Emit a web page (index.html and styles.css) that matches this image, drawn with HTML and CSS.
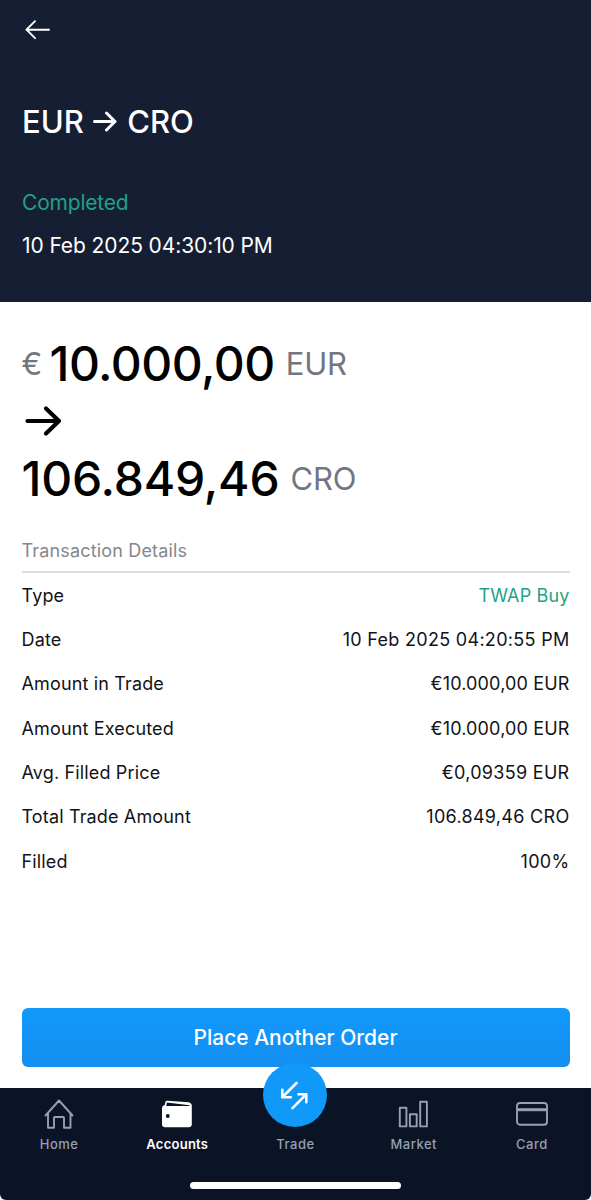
FILE: index.html
```html
<!DOCTYPE html>
<html lang="en">
<head>
    <meta charset="UTF-8">
    <meta name="viewport" content="width=device-width, initial-scale=1.0">
    <title>EUR to CRO</title>
    <link rel="stylesheet" href="styles.css">
</head>
<body>
    <div class="app">
        <header class="header">
            <a class="back" href="#" aria-label="Back">
                <svg width="26" height="20" viewBox="0 0 26 20"><path d="M24 9.7H1.5M10 1.2L1.5 9.7L10 18.2"/></svg>
            </a>
            <h1 class="title">
                <span>EUR</span>
                <svg class="title-arrow" width="24" height="22" viewBox="0 0 24 22"><path d="M1.5 11.5H22M13.5 3L22 11.5L13.5 20"/></svg>
                <span>CRO</span>
            </h1>
            <p class="status">Completed</p>
            <p class="time">10 Feb 2025 04:30:10 PM</p>
        </header>

        <main class="content">
            <div class="amount">
                <span class="symbol">€</span>
                <span class="value value-from">10.000,00</span>
                <span class="unit">EUR</span>
            </div>
            <svg class="amount-arrow" width="37" height="32" viewBox="0 0 37 32"><path d="M2.5 16H34M21 3.5L34 16L21 28.5"/></svg>
            <div class="amount">
                <span class="value value-to">106.849,46</span>
                <span class="unit">CRO</span>
            </div>

            <h2 class="details-title">Transaction Details</h2>
            <div class="details">
                <div class="row"><span>Type</span><span class="green">TWAP Buy</span></div>
                <div class="row"><span>Date</span><span class="num">10 Feb 2025 04:20:55 PM</span></div>
                <div class="row"><span>Amount in Trade</span><span>€10.000,00 EUR</span></div>
                <div class="row"><span>Amount Executed</span><span>€10.000,00 EUR</span></div>
                <div class="row"><span>Avg. Filled Price</span><span class="num">€0,09359 EUR</span></div>
                <div class="row"><span>Total Trade Amount</span><span class="num">106.849,46 CRO</span></div>
                <div class="row"><span>Filled</span><span class="num">100%</span></div>
            </div>

            <button class="order-btn">Place Another Order</button>
        </main>

        <nav class="tabs">
            <a class="tab" href="#">
                <svg width="32" height="32" viewBox="0 0 32 32"><path d="M2.5 17.5L16 2.5L29.5 17.5M5 15V29.7H11V20Q11 19 12 19H20Q21 19 21 20V29.7H27.5V15"/></svg>
                <span>Home</span>
            </a>
            <a class="tab active" href="#">
                <svg width="32" height="32" viewBox="0 0 32 32">
                    <path class="solid" d="M3.8 7L4.3 4Q4.8 2.6 6.5 2.7L27.5 4.2Q30.8 4.6 30.8 8V26Q30.8 29.2 27.5 29.2H4.2Q1 29.2 1 26V10Q1 7.6 3.8 7Z"/>
                    <path class="cutout" d="M5.8 4.6L28.5 7.2V7.9H5.3Z"/>
                    <circle class="cutout" cx="6.8" cy="18" r="1.9"/>
                </svg>
                <span>Accounts</span>
            </a>
            <a class="tab trade" href="#">
                <i class="trade-icon">
                    <svg width="30" height="30" viewBox="0 0 30 30"><path d="M16.5 3L2.5 17M2.3 9.7V17.3H10.8M12.5 28.2L26.2 14.4M18.5 14.2H26.3V22.2"/></svg>
                </i>
                <span>Trade</span>
            </a>
            <a class="tab" href="#">
                <svg width="32" height="32" viewBox="0 0 32 32"><path d="M1.8 9.8H8.4V28.4H1.8ZM11.9 16.3H18.7V28.4H11.9ZM22.2 3.8H28.9V28.4H22.2Z"/></svg>
                <span>Market</span>
            </a>
            <a class="tab" href="#">
                <svg width="32" height="32" viewBox="0 0 32 32"><rect x="1" y="5" width="30" height="21.8" rx="3"/><path class="stripe" d="M1 11.7H31"/></svg>
                <span>Card</span>
            </a>
            <div class="home-bar"></div>
        </nav>
    </div>
</body>
</html>
```

FILE: styles.css
```css
* {
    box-sizing: border-box;
    margin: 0;
    padding: 0;
}
body {
    font-family: Inter, "Liberation Sans", sans-serif;
    background: #fff;
    color: #111318;
}
a {
    color: inherit;
    text-decoration: none;
}
svg {
    display: block;
    flex: none;
    fill: none;
    stroke: currentColor;
    stroke-linecap: round;
    stroke-linejoin: round;
}
.app {
    display: flex;
    flex-direction: column;
    width: 591px;
    height: 1200px;
    overflow: hidden;
}
.header {
    height: 301.5px;
    padding: 20px 22px 0;
    background: #161e33;
    color: #fff;
}
.back {
    display: block;
    width: 26px;
    margin-left: 3px;
}
.back svg {
    stroke-width: 1.9;
}
.title {
    display: flex;
    align-items: center;
    height: 40px;
    margin-top: 61px;
    font-size: 31px;
    font-weight: 550;
}
.title-arrow {
    margin: 0 10px 0 9.5px;
    stroke-width: 3;
}
.status {
    margin-top: 47px;
    font-size: 21px;
    line-height: 30px;
    letter-spacing: -0.2px;
    color: #1fa188;
}
.time {
    margin-top: 13px;
    font-size: 21px;
    line-height: 30px;
    letter-spacing: -0.1px;
}
.content {
    display: flex;
    flex-direction: column;
    flex: 1;
    padding: 33px 21.5px 21.5px;
}
.amount {
    display: flex;
    align-items: center;
    height: 58px;
    white-space: nowrap;
}
.symbol,
.unit {
    font-size: 31px;
    letter-spacing: -0.2px;
    color: #727680;
}
.value {
    font-size: 48px;
    font-weight: 500;
    color: #000;
}
.value-from {
    margin: 0 11px 0 7.5px;
    letter-spacing: -0.5px;
}
.value-to {
    margin-right: 11px;
    letter-spacing: -0.2px;
}
.amount-arrow {
    margin: 12px 0 13px 3px;
    color: #000;
    stroke-width: 4.2;
}
.details-title {
    height: 65px;
    padding-top: 30px;
    font-size: 18px;
    font-weight: 400;
    line-height: 26px;
    letter-spacing: 0.17px;
    color: #85878c;
    border-bottom: 2px solid #dcdde0;
}
.details {
    padding-top: 0.6px;
}
.row {
    display: flex;
    align-items: center;
    justify-content: space-between;
    height: 44.3px;
    font-size: 18px;
    letter-spacing: 0.15px;
}
.num {
    letter-spacing: 0.3px;
}
.green {
    color: #1fa384;
}
.order-btn {
    height: 59px;
    margin-top: auto;
    border: none;
    border-radius: 6px;
    background: linear-gradient(#1199fc, #148ff0);
    color: #fff;
    font-family: inherit;
    font-size: 21px;
    font-weight: 450;
}
.tabs {
    position: relative;
    display: grid;
    grid-template-columns: repeat(5, 1fr);
    height: 112px;
    padding-top: 10px;
    background: #0b1426;
    border-radius: 0 0 6px 6px;
}
.tab {
    display: flex;
    flex-direction: column;
    align-items: center;
    font-size: 13px;
    font-weight: 450;
    letter-spacing: 0.5px;
    line-height: 18px;
    color: #979fb3;
}
.tab svg {
    stroke-width: 1.9;
}
.tab span {
    margin-top: 5px;
}
.tab.active {
    color: #fff;
    font-weight: 600;
    letter-spacing: 0.25px;
}
.solid {
    fill: #fff;
    stroke: none;
}
.cutout {
    fill: #0b1426;
    stroke: none;
}
.stripe {
    stroke-width: 3;
    stroke-linecap: butt;
}
.trade-icon {
    display: flex;
    align-items: center;
    justify-content: center;
    width: 64px;
    height: 64px;
    margin-top: -35px;
    border-radius: 50%;
    background: #1199fa;
    color: #fff;
}
.trade-icon svg {
    stroke-width: 2.6;
}
.trade span {
    margin-top: 8px;
}
.home-bar {
    position: absolute;
    left: 190px;
    bottom: 11px;
    width: 211px;
    height: 7px;
    border-radius: 4px;
    background: #fff;
}
```
